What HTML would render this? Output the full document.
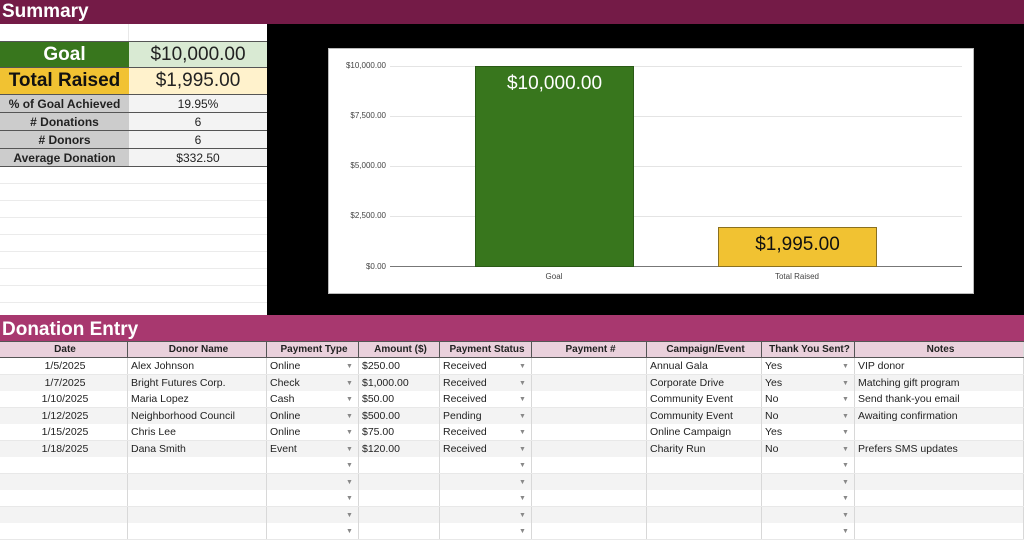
<!DOCTYPE html>
<html><head><meta charset="utf-8"><style>
*{margin:0;padding:0;box-sizing:border-box}
body{width:1024px;height:531px;overflow:hidden;background:#fff;font-family:"Liberation Sans",sans-serif;position:relative;font-size:10.5px;color:#222}
.a{position:absolute}
.bar{left:0;width:1024px;color:#fff;font-weight:bold;font-size:19px;padding-left:2px}
.c{position:absolute;height:100%;border-right:1px solid #d8d8d8;white-space:nowrap;overflow:hidden;padding-left:3px;line-height:17px}
.r{position:absolute;left:0;width:1024px;height:17px;border-bottom:1px solid #e8e8e8}
.dd{position:absolute;font-size:7px;color:#888;top:5px}
.s{position:absolute;left:0;width:267px;border-bottom:1px solid #555;display:flex}
.s div{display:flex;align-items:center;justify-content:center;height:100%}
.yl{position:absolute;right:638px;font-size:8px;color:#444;text-align:right}
.g{position:absolute;left:390px;width:572px;height:1px;background:#e4e4e4}
</style></head><body>
<div class="a bar" style="top:0;height:24px;background:#741b47;line-height:24px">Summary</div>
<div class="a" style="left:0;top:24px;width:267px;height:291px;background:#fff"></div>
<div class="a" style="left:128px;top:24px;width:1px;height:291px;background:#e8e8e8"></div>
<div class="a" style="left:0;top:167px;width:267px;height:148px;background:repeating-linear-gradient(#fff 0 16px,#ebebeb 16px 17px)"></div>
<div class="s" style="top:41px;height:27px;border-top:1px solid #555"><div style="width:129px;background:#38761d;color:#fff;font-weight:bold;font-size:19px">Goal</div><div style="width:138px;background:#d9ead3;font-size:19px">$10,000.00</div></div>
<div class="s" style="top:68px;height:27px"><div style="width:129px;background:#f1c232;font-weight:bold;font-size:19px;color:#111">Total Raised</div><div style="width:138px;background:#fff2cc;font-size:19px">$1,995.00</div></div>
<div class="s" style="top:95px;height:18px"><div style="width:129px;background:#ccc;font-weight:bold;font-size:12px">% of Goal Achieved</div><div style="width:138px;background:#f3f3f3;font-size:12px">19.95%</div></div>
<div class="s" style="top:113px;height:18px"><div style="width:129px;background:#ccc;font-weight:bold;font-size:12px"># Donations</div><div style="width:138px;background:#f3f3f3;font-size:12px">6</div></div>
<div class="s" style="top:131px;height:18px"><div style="width:129px;background:#ccc;font-weight:bold;font-size:12px"># Donors</div><div style="width:138px;background:#f3f3f3;font-size:12px">6</div></div>
<div class="s" style="top:149px;height:18px"><div style="width:129px;background:#ccc;font-weight:bold;font-size:12px">Average Donation</div><div style="width:138px;background:#f3f3f3;font-size:12px">$332.50</div></div>
<div class="a" style="left:267px;top:24px;width:757px;height:291px;background:#000"></div>
<div class="a" style="left:328px;top:48px;width:646px;height:246px;background:#fff;border:1px solid #bbb"></div>
<div class="g" style="top:66px"></div><div class="g" style="top:116px"></div><div class="g" style="top:166px"></div><div class="g" style="top:216px"></div>
<div class="a" style="left:390px;top:266px;width:572px;height:1px;background:#777"></div>
<div class="yl" style="top:61px">$10,000.00</div><div class="yl" style="top:111px">$7,500.00</div><div class="yl" style="top:161px">$5,000.00</div><div class="yl" style="top:211px">$2,500.00</div><div class="yl" style="top:262px">$0.00</div>
<div class="a" style="left:475px;top:66px;width:159px;height:201px;background:#38761d;border:1px solid #2a5a16;color:#fff;font-size:19px;text-align:center;padding-top:6px">$10,000.00</div>
<div class="a" style="left:718px;top:227px;width:159px;height:40px;background:#f1c232;border:1px solid #8a7020;color:#111;font-size:19px;text-align:center;padding-top:6px">$1,995.00</div>
<div class="a" style="left:534px;top:272px;width:40px;text-align:center;font-size:8px;color:#444">Goal</div>
<div class="a" style="left:757px;top:272px;width:80px;text-align:center;font-size:8px;color:#444">Total Raised</div>
<div class="a bar" style="top:315px;height:26px;background:#a8386f;line-height:30px">Donation Entry</div>
<div class="r" style="top:341px;background:#ead1dc;border-bottom:1px solid #555;border-top:1px solid #555;font-weight:bold;font-size:10px">
<div class="c" style="left:0;width:128px;text-align:center;border-color:#555;line-height:15px">Date</div><div class="c" style="left:128px;width:139px;text-align:center;border-color:#555;line-height:15px">Donor Name</div><div class="c" style="left:267px;width:92px;text-align:center;border-color:#555;line-height:15px">Payment Type</div><div class="c" style="left:359px;width:81px;text-align:center;border-color:#555;line-height:15px">Amount ($)</div><div class="c" style="left:440px;width:92px;text-align:center;border-color:#555;line-height:15px">Payment Status</div><div class="c" style="left:532px;width:115px;text-align:center;border-color:#555;line-height:15px">Payment #</div><div class="c" style="left:647px;width:115px;text-align:center;border-color:#555;line-height:15px">Campaign/Event</div><div class="c" style="left:762px;width:93px;text-align:center;border-color:#555;line-height:15px">Thank You Sent?</div><div class="c" style="left:855px;width:169px;text-align:center;line-height:15px">Notes</div></div>
<div id="rows"></div>
<script>
var d=[["1/5/2025","Alex Johnson","Online","$250.00","Received","Annual Gala","Yes","VIP donor"],["1/7/2025","Bright Futures Corp.","Check","$1,000.00","Received","Corporate Drive","Yes","Matching gift program"],["1/10/2025","Maria Lopez","Cash","$50.00","Received","Community Event","No","Send thank-you email"],["1/12/2025","Neighborhood Council","Online","$500.00","Pending","Community Event","No","Awaiting confirmation"],["1/15/2025","Chris Lee","Online","$75.00","Received","Online Campaign","Yes",""],["1/18/2025","Dana Smith","Event","$120.00","Received","Charity Run","No","Prefers SMS updates"]];
var tops=[358,375,391,408,424,441,457,474,490,507,523],h="";
for(var i=0;i<11;i++){var r=d[i]||["","","","","","","",""];
h+='<div class="r" style="top:'+tops[i]+'px;background:'+(i%2?'#f3f3f3':'#fff')+'">'+
'<div class="c" style="left:0;width:128px;text-align:center">'+r[0]+'</div>'+
'<div class="c" style="left:128px;width:139px">'+r[1]+'</div>'+
'<div class="c" style="left:267px;width:92px">'+r[2]+'</div><span class="dd" style="left:346px">▼</span>'+
'<div class="c" style="left:359px;width:81px">'+r[3]+'</div>'+
'<div class="c" style="left:440px;width:92px">'+r[4]+'</div><span class="dd" style="left:519px">▼</span>'+
'<div class="c" style="left:532px;width:115px"></div>'+
'<div class="c" style="left:647px;width:115px">'+r[5]+'</div>'+
'<div class="c" style="left:762px;width:93px">'+r[6]+'</div><span class="dd" style="left:842px">▼</span>'+
'<div class="c" style="left:855px;width:169px">'+r[7]+'</div></div>';}
document.getElementById("rows").innerHTML=h;
</script>
</body></html>
